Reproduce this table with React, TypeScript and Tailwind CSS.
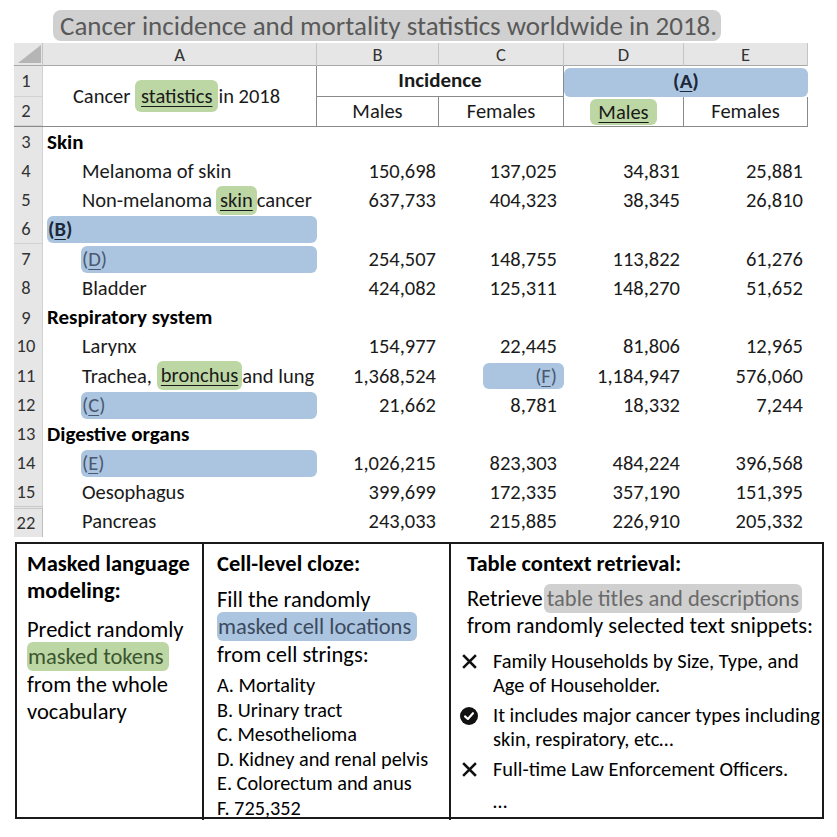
import type { ReactNode } from 'react';

const GREEN = 'bg-[#bdd7a4]';
const BLUE = 'bg-[#abc5e0]';

type Row = {
  n: string;
  label: ReactNode;
  type: 'cat' | 'item' | 'maskCat' | 'maskItem';
  vals?: ReactNode[];
};

const U = ({ children }: { children: ReactNode }) => (
  <span className="underline decoration-1 underline-offset-[3px]">{children}</span>
);

const rows: Row[] = [
  { n: '3', label: 'Skin', type: 'cat' },
  { n: '4', label: 'Melanoma of skin', type: 'item', vals: ['150,698', '137,025', '34,831', '25,881'] },
  {
    n: '5',
    label: (
      <>
        Non-melanoma{' '}
        <span className={`${GREEN} ml-[4px] inline-block rounded-md px-[4px] leading-[29px]`}>
          <U>skin</U>
        </span>
        cancer
      </>
    ),
    type: 'item',
    vals: ['637,733', '404,323', '38,345', '26,810'],
  },
  { n: '6', label: <>(<U>B</U>)</>, type: 'maskCat' },
  { n: '7', label: <>(<U>D</U>)</>, type: 'maskItem', vals: ['254,507', '148,755', '113,822', '61,276'] },
  { n: '8', label: 'Bladder', type: 'item', vals: ['424,082', '125,311', '148,270', '51,652'] },
  { n: '9', label: 'Respiratory system', type: 'cat' },
  { n: '10', label: 'Larynx', type: 'item', vals: ['154,977', '22,445', '81,806', '12,965'] },
  {
    n: '11',
    label: (
      <>
        Trachea,{' '}
        <span className={`${GREEN} ml-[5px] inline-block rounded-md px-[4px] leading-[29px]`}>
          <U>bronchus</U>
        </span>
        and lung
      </>
    ),
    type: 'item',
    vals: [
      '1,368,524',
      <div key="f" className={`${BLUE} ml-auto -mr-[7px] h-[26px] w-[81px] rounded-md pr-[7px] text-right leading-[26px] text-[#4a5870]`}>
        (<U>F</U>)
      </div>,
      '1,184,947',
      '576,060',
    ],
  },
  { n: '12', label: <>(<U>C</U>)</>, type: 'maskItem', vals: ['21,662', '8,781', '18,332', '7,244'] },
  { n: '13', label: 'Digestive organs', type: 'cat' },
  { n: '14', label: <>(<U>E</U>)</>, type: 'maskItem', vals: ['1,026,215', '823,303', '484,224', '396,568'] },
  { n: '15', label: 'Oesophagus', type: 'item', vals: ['399,699', '172,335', '357,190', '151,395'] },
  { n: '22', label: 'Pancreas', type: 'item', vals: ['243,033', '215,885', '226,910', '205,332'] },
];

const valPad = ['pr-[3px]', 'pr-[7px]', 'pr-[4px]', 'pr-[5px]'];

const RowHead = ({ n, last }: { n: string; last?: boolean }) => (
  <div
    className={`flex items-center justify-center border-r border-[#bdbdbd] bg-[#e6e6e6] pr-[4px] text-[18.5px] text-[#333] ${
      last ? 'border-t-[3px] border-double border-t-[#c8c8c8]' : 'border-b border-[#d2d2d2]'
    }`}
  >
    {n}
  </div>
);

const LabelCell = ({ row }: { row: Row }) => {
  if (row.type === 'cat')
    return <div className="flex items-center pl-[4px] text-[21px] font-bold whitespace-nowrap text-black">{row.label}</div>;
  if (row.type === 'item')
    return <div className="flex items-center overflow-hidden pl-[39px] whitespace-nowrap">{row.label}</div>;
  return (
    <div className={`flex items-center ${row.type === 'maskCat' ? 'pl-[4px]' : 'pl-[38px]'}`}>
      <div
        className={`${BLUE} flex h-[27px] flex-1 items-center rounded-md pl-[1px] ${
          row.type === 'maskCat' ? 'font-bold text-[#1c2738]' : 'text-[#4a5870]'
        }`}
      >
        {row.label}
      </div>
    </div>
  );
};

const XIcon = () => (
  <svg width="15" height="15" viewBox="0 0 15 15" className="mt-[5px]">
    <path d="M2 2 L13 13 M13 2 L2 13" stroke="#111" strokeWidth="2.5" strokeLinecap="square" />
  </svg>
);

const CheckIcon = () => (
  <svg width="18" height="18" viewBox="0 0 18 18" className="mt-[4px] -ml-[2px]">
    <circle cx="9" cy="9" r="9" fill="#111" />
    <path d="M5 9.4 L7.9 12 L13 6.2" stroke="#fff" strokeWidth="2.1" fill="none" strokeLinecap="round" strokeLinejoin="round" />
  </svg>
);

const Snippet = ({ icon, children }: { icon: ReactNode; children: ReactNode }) => (
  <div className="flex">
    <div className="w-[26px] shrink-0">
      <div className="-ml-[5px]">{icon}</div>
    </div>
    <div>{children}</div>
  </div>
);

export default function App() {
  return (
    <div className="h-[837px] w-[837px] bg-white pt-[10px] font-[family-name:Carlito,Lato,sans-serif] text-[#1a1a1a]">
      {/* Caption */}
      <div className="ml-[53px] w-fit rounded-lg bg-[#d0d0d0] pl-[7px] pr-[4px] text-[27px] leading-[31px] text-[#595959]">
        Cancer incidence and mortality statistics worldwide in 2018.
      </div>

      {/* Spreadsheet */}
      <div className="ml-[14px] mt-[2px] w-[794px] text-[20.5px]">
        <div className="grid h-[23px] grid-cols-[29px_274px_122px_125px_120px_124px] border-b border-[#a8a8a8] bg-[#e6e6e6] text-[18.5px] leading-[23px] text-[#333]">
          <div className="relative border-r border-[#c4c4c4]">
            <svg width="29" height="23" className="absolute inset-0">
              <polygon points="4,20 27,2 27,20" fill="#b5b5b5" />
            </svg>
          </div>
          {['A', 'B', 'C', 'D', 'E'].map((c) => (
            <div key={c} className="border-r border-[#c4c4c4] text-center">
              {c}
            </div>
          ))}
        </div>

        {/* Header rows 1-2 */}
        <div className="grid grid-cols-[29px_274px_122px_125px_120px_124px] grid-rows-[31px_29px] border-b border-[#8a8a8a]">
          <RowHead n="1" />
          <div className="row-span-2 flex items-center justify-center border-r border-[#8a8a8a] pr-[6px]">
            Cancer&nbsp;
            <span className={`${GREEN} inline-block rounded-md px-[6px] leading-[32px]`}>
              <U>statistics</U>
            </span>
            in 2018
          </div>
          <div className="col-span-2 flex items-center justify-center border-r border-b border-[#8a8a8a] text-[21px] font-bold">
            Incidence
          </div>
          <div className="col-span-2 flex items-center pt-[1px]">
            <div className={`${BLUE} flex h-[29px] w-[246px] items-center justify-center rounded-md text-[21px] font-bold text-[#1c2738]`}>
              (<U>A</U>)
            </div>
          </div>
          <RowHead n="2" />
          <div className="flex items-center justify-center border-r border-[#8a8a8a]">Males</div>
          <div className="flex items-center justify-center border-r border-[#8a8a8a]">Females</div>
          <div className="flex items-center justify-center border-r border-[#8a8a8a]">
            <span className={`${GREEN} inline-block rounded-md px-[8px] leading-[26px]`}>
              <U>Males</U>
            </span>
          </div>
          <div className="flex items-center justify-center border-r border-[#8a8a8a]">Females</div>
        </div>

        {/* Body rows */}
        {rows.map((row, i) => (
          <div key={row.n} className="grid h-[29.2px] grid-cols-[29px_274px_122px_125px_120px_124px]">
            <RowHead n={row.n} last={i === rows.length - 1} />
            <LabelCell row={row} />
            {(row.vals ?? ['', '', '', '']).map((v, j) => (
              <div key={j} className={`flex items-center justify-end ${valPad[j]}`}>
                {v}
              </div>
            ))}
          </div>
        ))}
      </div>

      {/* Pre-training objectives */}
      <div className="ml-[15px] mt-[6px] grid h-[277px] w-[809px] grid-cols-[185px_247px_1fr] border-2 border-[#1a1a1a] text-black">
        <div className="pl-[10px] pt-[6px]">
          <div className="text-[22.5px] font-bold leading-[27px]">
            Masked language
            <br />
            modeling:
          </div>
          <div className="mt-[12px] text-[22.5px] leading-[27.5px]">
            Predict randomly
            <br />
            <span className={`${GREEN} rounded-md py-[1px] pr-[5px] pl-[1px] text-[#3b5530]`}>masked tokens</span>
            <br />
            from the whole
            <br />
            vocabulary
          </div>
        </div>

        <div className="border-l-2 border-[#1a1a1a] pl-[13px] pt-[6px]">
          <div className="text-[22.5px] font-bold leading-[27px]">Cell-level cloze:</div>
          <div className="mt-[9px] text-[22.5px] leading-[27.5px]">
            Fill the randomly
            <br />
            <span className={`${BLUE} rounded-md py-[1px] pr-[6px] pl-[1px] text-[#3c4a5e]`}>masked cell locations</span>
            <br />
            from cell strings:
          </div>
          <div className="mt-[5px] text-[20.3px] leading-[24.5px]">
            <div>A. Mortality</div>
            <div>B. Urinary tract</div>
            <div>C. Mesothelioma</div>
            <div>D. Kidney and renal pelvis</div>
            <div>E. Colorectum and anus</div>
            <div>F. 725,352</div>
          </div>
        </div>

        <div className="border-l-2 border-[#1a1a1a] pl-[16px] pt-[6px]">
          <div className="text-[22.5px] font-bold leading-[27px]">Table context retrieval:</div>
          <div className="mt-[8px] text-[22.5px] leading-[27px]">
            Retrieve{' '}
            <span className="-ml-[4px] rounded-md bg-[#d0d0d0] py-[1px] px-[3px] text-[#6a6a6a]">table titles and descriptions</span>
            <br />
            from randomly selected text snippets:
          </div>
          <div className="mt-[10px] flex flex-col gap-[6px] text-[20.4px] leading-[24px]">
            <Snippet icon={<XIcon />}>
              Family Households by Size, Type, and
              <br />
              Age of Householder.
            </Snippet>
            <Snippet icon={<CheckIcon />}>
              It includes major cancer types including
              <br />
              skin, respiratory, etc…
            </Snippet>
            <Snippet icon={<XIcon />}>Full-time Law Enforcement Officers.</Snippet>
            <div className="pl-[26px] pt-[2px]">…</div>
          </div>
        </div>
      </div>
    </div>
  );
}
